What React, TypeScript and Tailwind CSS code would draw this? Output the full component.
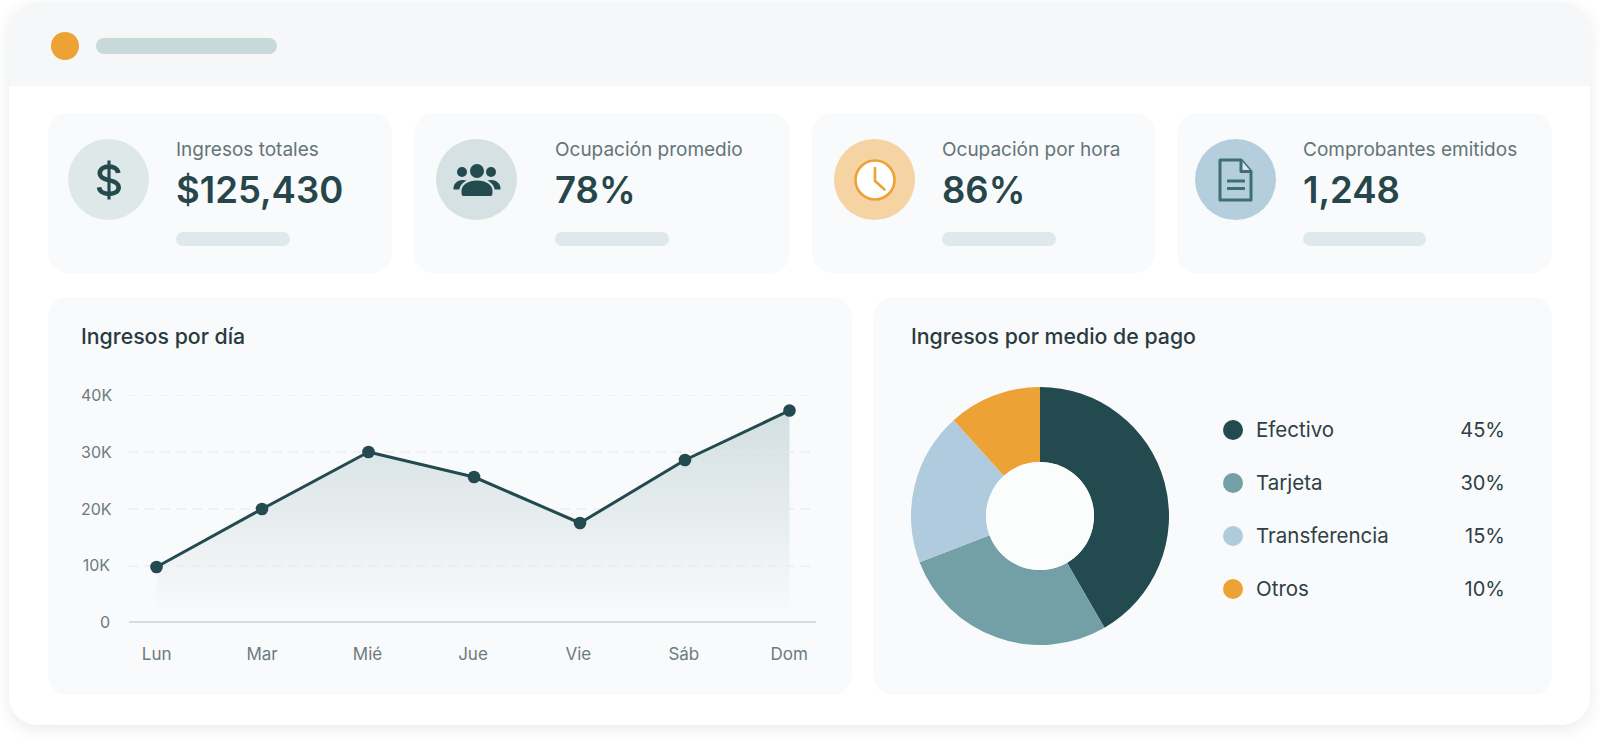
const font = { fontFamily: "Inter, 'Liberation Sans', sans-serif" };

function DollarIcon() {
  return (
    <svg width="24" height="42" viewBox="0 0 26 44" fill="none" stroke="#234a4e">
      <path d="M13 1v42" strokeWidth="3.400" />
      <path
        d="M23 14.500C22.500 10 18.500 7.500 13 7.500c-5.800 0-10 2.900-10 7.300 0 4.500 3.600 6.200 10 7.400 6.500 1.200 10.500 3 10.500 7.700 0 4.500-4.300 7.200-10.500 7.200-5.900 0-10.300-2.700-10.800-7.200"
        strokeWidth="5"
      />
    </svg>
  );
}

function UsersIcon() {
  return (
    <svg width="50" height="34" viewBox="0 0 50 34" fill="#234a4e">
      <circle cx="25" cy="8" r="7" />
      <circle cx="10" cy="9" r="5" />
      <circle cx="39" cy="9" r="5" />
      <path d="M11 33c-1.500-.2-1.500-3-1.500-5 0-6 6.500-10.500 15.500-10.500S40.500 22 40.500 28c0 2 0 4.800-1.500 5z" />
      <path d="M1.500 26.500c-.5-5 3-9.500 9.500-9.500 1.300 0 2.500.2 3.500.5-3.800 2-6.500 5-7.200 9z" />
      <path d="M48.500 26.500c.5-5-3-9.500-9.500-9.500-1.300 0-2.500.2-3.500.5 3.800 2 6.500 5 7.200 9z" />
    </svg>
  );
}

function ClockIcon() {
  return (
    <svg width="42" height="42" viewBox="0 0 42 42" fill="#fff" stroke="#eca235">
      <circle cx="21" cy="21" r="19.500" strokeWidth="2.600" />
      <path d="M21 9v13l9.500 8.500" fill="none" strokeWidth="2.600" strokeLinecap="round" strokeLinejoin="round" />
    </svg>
  );
}

function DocIcon() {
  return (
    <svg width="35" height="44" viewBox="0 0 35 44" fill="none" stroke="#3d6f75" strokeWidth="3" strokeLinejoin="round">
      <path d="M2 2h21l10 11.500V42H2z" />
      <path d="M23 2v11.500h10" fill="#dbe8f0" />
      <path d="M9 23h18M9 30.500h18" />
    </svg>
  );
}

const stats = [
  { label: "Ingresos totales", value: "$125,430", circle: "ml-[20px] bg-[#dfe8e9]", gap: "ml-[27px]", bar: "w-[114px]", icon: <DollarIcon /> },
  { label: "Ocupación promedio", value: "78%", circle: "ml-[22px] bg-[#d5e1e3]", gap: "ml-[38px]", bar: "w-[114px]", icon: <UsersIcon /> },
  { label: "Ocupación por hora", value: "86%", circle: "ml-[22px] bg-[#f5d3a2]", gap: "ml-[27px]", bar: "w-[114px]", icon: <ClockIcon /> },
  { label: "Comprobantes emitidos", value: "1,248", circle: "ml-[18px] bg-[#b5cede]", gap: "ml-[27px]", bar: "w-[123px]", icon: <DocIcon /> },
];

const points = [
  [27.500, 172],
  [133, 114],
  [239.500, 57],
  [345, 82],
  [451, 128],
  [556, 65],
  [660.500, 15.500],
];

const days = ["Lun", "Mar", "Mié", "Jue", "Vie", "Sáb", "Dom"];
const ticks = ["40K", "30K", "20K", "10K", "0"];

function LineChart() {
  const line = points.map((p) => p.join(",")).join(" ");
  const area = `27.500,222 ${line} 660.500,222`;
  return (
    <svg width="687" height="240" viewBox="0 0 687 240" fill="none">
      <defs>
        <linearGradient id="areaFill" x1="0" y1="16" x2="0" y2="222" gradientUnits="userSpaceOnUse">
          <stop offset="0" stopColor="#d3dfe1" />
          <stop offset="1" stopColor="#f9fafb" />
        </linearGradient>
      </defs>
      <polygon points={area} fill="url(#areaFill)" />
      {[0, 57, 114, 171].map((y) => (
        <path key={y} d={`M0 ${y}H687`} stroke="#e2e7e9" strokeWidth="1.200" strokeDasharray="9 7" />
      ))}
      <path d="M0 227H687" stroke="#d7dce0" strokeWidth="2" />
      <polyline points={line} stroke="#234a4e" strokeWidth="3" strokeLinejoin="round" />
      {points.map(([x, y]) => (
        <circle key={x} cx={x} cy={y} r="6.300" fill="#234a4e" />
      ))}
    </svg>
  );
}

const slices = [
  { from: 0, to: 150, color: "#234a4e" },
  { from: 150, to: 249, color: "#73a0a6" },
  { from: 249, to: 318, color: "#afcbdd" },
  { from: 318, to: 360, color: "#eca235" },
];

function slicePath(from: number, to: number) {
  const polar = (r: number, a: number) => {
    const rad = (a * Math.PI) / 180;
    return `${(129 + r * Math.sin(rad)).toFixed(2)} ${(129 - r * Math.cos(rad)).toFixed(2)}`;
  };
  const large = to - from > 180 ? 1 : 0;
  return `M${polar(129, from)}A129 129 0 ${large} 1 ${polar(129, to)}L${polar(54, to)}A54 54 0 ${large} 0 ${polar(54, from)}Z`;
}

function Donut() {
  return (
    <svg width="258" height="258" viewBox="0 0 258 258">
      {slices.map((s) => (
        <path key={s.from} d={slicePath(s.from, s.to)} fill={s.color} />
      ))}
      <circle cx="129" cy="129" r="54" fill="#fbfcfc" />
    </svg>
  );
}

const legend = [
  { name: "Efectivo", pct: "45%", dot: "bg-[#234a4e]" },
  { name: "Tarjeta", pct: "30%", dot: "bg-[#73a0a6]" },
  { name: "Transferencia", pct: "15%", dot: "bg-[#afcbdd]" },
  { name: "Otros", pct: "10%", dot: "bg-[#eca235]" },
];

export default function App() {
  return (
    <div className="w-[1600px] h-[742px] overflow-hidden bg-white pt-[3px] pl-[9px]" style={font}>
      <div className="w-[1581px] h-[722px] rounded-[28px] bg-white overflow-hidden shadow-[0_4px_16px_rgba(40,60,70,0.10)]">
        {/* top bar */}
        <div className="h-[83px] bg-[#f5f7f8] flex items-center pl-[42px] pt-[2px]">
          <div className="w-[28px] h-[28px] rounded-full bg-[#eca235]" />
          <div className="ml-[17px] w-[181px] h-[16px] rounded-full bg-[#c8d9da]" />
        </div>

        <div className="pl-[39px] pt-[27px]">
          {/* stat cards */}
          <div className="grid grid-cols-[344px_376px_343px_375px] gap-x-[22px] h-[160px]">
            {stats.map((s) => (
              <div key={s.label} className="rounded-[20px] bg-[#f9fafb] flex items-start pt-[25px]">
                <div className={`w-[81px] h-[81px] mt-[1px] shrink-0 rounded-full flex items-center justify-center ${s.circle}`}>
                  {s.icon}
                </div>
                <div className={s.gap}>
                  <div className="text-[19px] leading-[24px] text-[#63757a]">{s.label}</div>
                  <div className="mt-[5px] text-[36.500px] leading-[46px] font-semibold text-[#26464b]">{s.value}</div>
                  <div className={`mt-[19px] h-[14px] rounded-full bg-[#dfe8ea] ${s.bar}`} />
                </div>
              </div>
            ))}
          </div>

          {/* charts */}
          <div className="mt-[24px] flex gap-x-[21px]">
            <div className="w-[804px] h-[398px] rounded-[20px] bg-[#f9fafb] pl-[33px] pt-[26px]">
              <h2 className="text-[21.300px] leading-[26px] font-medium text-[#2a3a3f]">Ingresos por día</h2>
              <div className="mt-[46px] flex">
                <div className="w-[29px] h-[240px] text-[16px] leading-[20px] text-[#6d7a7e] text-right">
                  {ticks.map((t) => (
                    <div key={t} className="h-[56.800px] -translate-y-[10px]">
                      {t}
                    </div>
                  ))}
                </div>
                <div className="ml-[19px]">
                  <LineChart />
                  <div className="flex mt-[9px] ml-[-25px] w-[738px] text-[17px] leading-[20px] text-[#6d7a7e]">
                    {days.map((d) => (
                      <div key={d} className="w-[105.500px] text-center">
                        {d}
                      </div>
                    ))}
                  </div>
                </div>
              </div>
            </div>

            <div className="w-[679px] h-[398px] rounded-[20px] bg-[#f9fafb] pl-[38px] pt-[26px]">
              <h2 className="text-[21.300px] leading-[26px] font-medium text-[#2a3a3f]">Ingresos por medio de pago</h2>
              <div className="mt-[38px] flex items-start">
                <Donut />
                <div className="ml-[54px] w-[282px] mt-[31px] flex flex-col gap-y-[29px]">
                  {legend.map((l) => (
                    <div key={l.name} className="flex items-center h-[24px] text-[20.500px] text-[#2f3f44]">
                      <div className={`w-[20px] h-[20px] rounded-full ${l.dot}`} />
                      <span className="ml-[13px]">{l.name}</span>
                      <span className="ml-auto text-[20px]">{l.pct}</span>
                    </div>
                  ))}
                </div>
              </div>
            </div>
          </div>
        </div>
      </div>
    </div>
  );
}
